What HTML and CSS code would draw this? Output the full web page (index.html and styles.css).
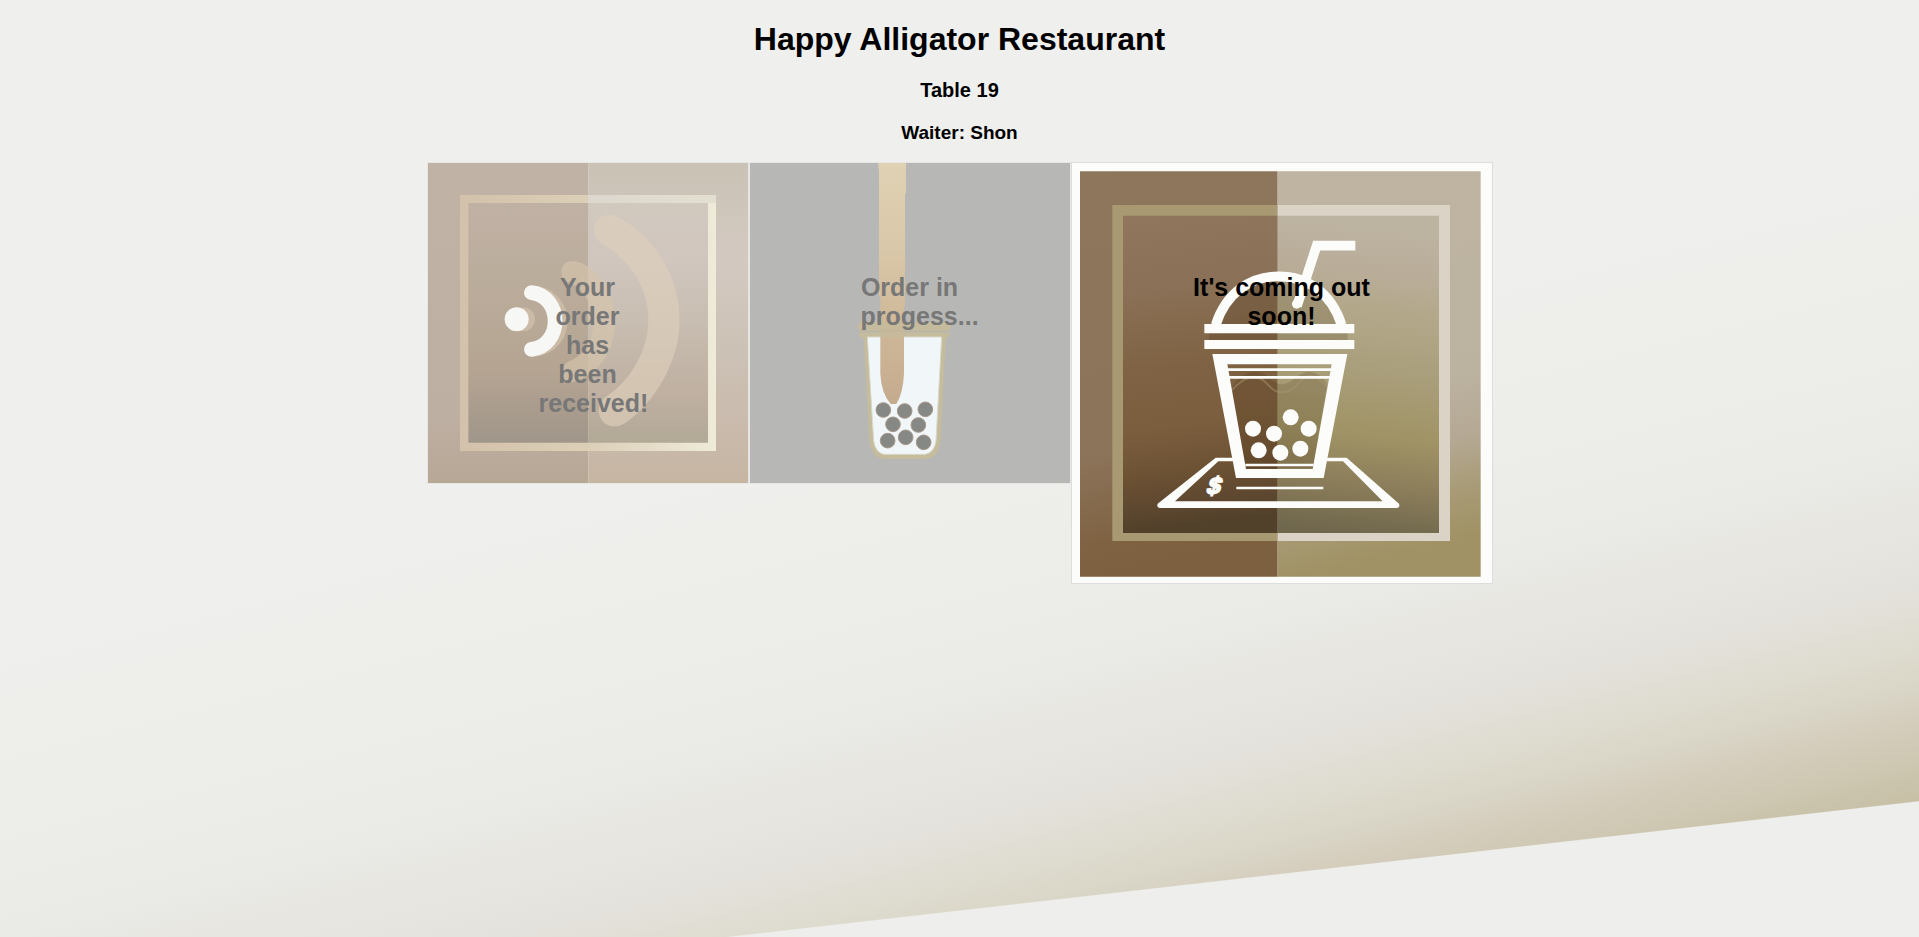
FILE: index.html
```html
<!DOCTYPE html>
<html lang="en">
<head>
<meta charset="utf-8">
<title>Happy Alligator Restaurant</title>
<link rel="stylesheet" href="styles.css">
</head>
<body>
<header class="header">
  <h1 class="title">Happy Alligator Restaurant</h1>
  <h2 class="table-number">Table 19</h2>
  <h3 class="waiter">Waiter: Shon</h3>
</header>
<main class="steps">
  <section class="step step-done">
    <svg class="art" viewBox="24 24 960 960" aria-hidden="true">
      <defs>
        <linearGradient id="a-left" x1="0" y1="0" x2="0" y2="1"><stop offset="0" stop-color="#c1b2a6"/><stop offset=".8" stop-color="#beafa3"/><stop offset="1" stop-color="#b7a795"/></linearGradient>
        <linearGradient id="a-right" x1="0" y1="0" x2="0" y2="1"><stop offset="0" stop-color="#cbc2b6"/><stop offset=".12" stop-color="#cec5ba"/><stop offset=".3" stop-color="#d3c9c1"/><stop offset=".6" stop-color="#cbc1b4"/><stop offset=".8" stop-color="#cabbae"/><stop offset="1" stop-color="#c6b5a1"/></linearGradient>
        <linearGradient id="a-in-left" x1="0" y1="0" x2="0" y2="1"><stop offset="0" stop-color="#c0b1a5"/><stop offset=".3" stop-color="#bbad9c"/><stop offset=".7" stop-color="#b5a492"/><stop offset="1" stop-color="#a0968a"/></linearGradient>
        <linearGradient id="a-in-right" x1="0" y1="0" x2="0" y2="1"><stop offset="0" stop-color="#d1c8be"/><stop offset=".25" stop-color="#d0c6be"/><stop offset=".5" stop-color="#c7bdb0"/><stop offset=".8" stop-color="#bfb0a1"/><stop offset="1" stop-color="#b2a997"/></linearGradient>
        <linearGradient id="a-frame" x1="0" y1="0" x2="1" y2="0"><stop offset="0" stop-color="#d3c1ab"/><stop offset=".5" stop-color="#dccfb8"/><stop offset="1" stop-color="#efebd9"/></linearGradient>
        <linearGradient id="a-top" x1="0" y1="0" x2="1" y2="0"><stop offset="0" stop-color="#dcd8ce"/><stop offset="1" stop-color="#e3dfd0"/></linearGradient>
      </defs>
      <path fill="url(#a-left)" d="M24 24h481v960H24z"/>
      <path fill="url(#a-right)" d="M505 24h479v960H505z"/>
      <path fill="url(#a-frame)" d="M120 120h768v768H120z"/>
      <path fill="url(#a-top)" d="M505 120h383v24H505z"/>
      <path fill="url(#a-in-left)" d="M145 144h360v719H145z"/>
      <path fill="url(#a-in-right)" d="M505 144h359v719H505z"/>
      <g fill="#dfd0bb" fill-opacity=".65">
        <path d="M588 184C704 243 779 365 779 495C779 616 706 741 617 803C591 821 558 817 543 791C529 767 538 739 560 724C633 675 685 586 685 492C685 400 631 315 548 268C524 254 515 226 526 204C537 181 566 174 588 184z"/>
      </g>
      <g fill="#d5c5ac" fill-opacity=".65">
        <path d="M466 319C539 336 585 418 585 505C585 590 530 665 460 681C440 685 425 670 425 652C425 636 435 624 451 617C493 599 519 555 519 507C519 453 491 398 447 382C427 375 421 357 425 341C429 325 447 315 466 319z"/>
      </g>
      <path d="M345 414C443 426 448 570 345 583" fill="none" stroke="#cbbba6" stroke-width="44" stroke-linecap="round"/>
      <circle cx="309" cy="493" r="36" fill="#cbbba6"/>
      <path d="M334 413C429 423 429 573 334 583" fill="none" stroke="#f7f7f5" stroke-width="44" stroke-linecap="round"/>
      <circle cx="290" cy="493" r="36" fill="#f7f7f5"/>
    </svg>
    <p class="caption">Your order has been received!</p>
  </section>
  <section class="step step-done">
    <svg class="art" viewBox="15 24 960 960" aria-hidden="true">
      <defs>
        <linearGradient id="b-tea" x1="0" y1="0" x2="0" y2="1"><stop offset="0" stop-color="#e1d1b4"/><stop offset=".35" stop-color="#d9c8a9"/><stop offset=".65" stop-color="#cfb999"/><stop offset="1" stop-color="#c5ab8e"/></linearGradient>
      </defs>
      <path fill="#b7b7b5" d="M15 24h960v960H15z"/>
      <path fill="#c5bb9d" d="M345 500h265l9 16-9 12H345l-9-12zM343 532h271v10l-12 11-15 300q-6 59-46 59H419q-40 0-46-59L356 553l-13-11z"/>
      <path fill="#f1f6f8" stroke="#d9d9ca" stroke-width="3" d="M367 546h223l-17 312q-5 35-32 40H416q-25-6-30-40z"/>
      <path fill="url(#b-tea)" d="M400 24h83v92h-3v340h-3v200q-3 60-23 91h-17q-28-31-31-91V425h-4V41h-2z"/>
      <path fill="#c5bb9d" fill-opacity=".7" d="M405 500h73v46h-73z"/>
      <path stroke="#b9b3a0" stroke-width="3" d="M345 528h266"/>
      <g fill="#868886" stroke="#a89788" stroke-width="3">
        <circle cx="415" cy="765" r="22"/><circle cx="479" cy="768" r="22"/><circle cx="541" cy="763" r="22"/>
        <circle cx="444" cy="808" r="22"/><circle cx="520" cy="810" r="22"/>
        <circle cx="428" cy="857" r="22"/><circle cx="482" cy="847" r="22"/><circle cx="536" cy="862" r="22"/>
      </g>
    </svg>
    <p class="caption">Order in progess...</p>
  </section>
  <section class="step step-current">
    <svg class="art" viewBox="21 24 1260 1260" aria-hidden="true">
      <defs>
        <linearGradient id="c-left" x1="0" y1="0" x2=".12" y2="1"><stop offset="0" stop-color="#8e765d"/><stop offset=".7" stop-color="#8c745a"/><stop offset=".92" stop-color="#7f6242"/><stop offset="1" stop-color="#7d6040"/></linearGradient>
        <linearGradient id="c-right" x1="0" y1="0" x2=".12" y2="1"><stop offset="0" stop-color="#beb4a1"/><stop offset=".6" stop-color="#bcb2a0"/><stop offset=".75" stop-color="#b5a995"/><stop offset=".88" stop-color="#a89b76"/><stop offset="1" stop-color="#a09264"/></linearGradient>
        <linearGradient id="c-in-left" x1="0" y1="0" x2=".06" y2="1"><stop offset="0" stop-color="#8f765d"/><stop offset=".25" stop-color="#8a7056"/><stop offset=".5" stop-color="#7f6243"/><stop offset=".68" stop-color="#7b5e3e"/><stop offset=".82" stop-color="#6d5234"/><stop offset=".92" stop-color="#5f4830"/><stop offset="1" stop-color="#51402a"/></linearGradient>
        <linearGradient id="c-in-right" x1=".06" y1="0" x2="0" y2="1"><stop offset="0" stop-color="#bdb3a1"/><stop offset=".15" stop-color="#b9ad99"/><stop offset=".26" stop-color="#b3a88a"/><stop offset=".45" stop-color="#aa9f7c"/><stop offset=".66" stop-color="#a09365"/><stop offset=".82" stop-color="#8b7d5a"/><stop offset=".93" stop-color="#766d50"/><stop offset="1" stop-color="#6d654d"/></linearGradient>
      </defs>
      <path fill="#fcfcfa" d="M21 24h1260v1260H21z"/>
      <path fill="url(#c-left)" d="M45 49h593v1216H45z"/>
      <path fill="url(#c-right)" d="M638 49h609v1216H638z"/>
      <path fill="#a89973" d="M142 150h496v1008H142z"/>
      <path fill="#dad3c6" d="M638 150h517v1008H638z"/>
      <path fill="url(#c-in-left)" d="M174 182h464v952H174z"/>
      <path fill="url(#c-in-right)" d="M638 182h484v952H638z"/>
      <path fill="#2f1c00" fill-opacity=".15" d="M467 507Q500 374 640 374Q775 374 812 507zM432 535h416v20H432zM497 706Q525 650 570 650C610 650 620 688 650 688S700 650 735 650Q770 655 786 690L744 940H543z"/>
      <path fill="none" stroke="#aa9a70" stroke-opacity=".45" stroke-width="6" d="M500 706C550 650 585 660 610 690S670 720 700 685S755 660 785 694"/>
      <g fill="none" stroke="#fcfcfa">
        <path stroke-width="29" d="M452 510C483 414 555 364 641 364S799 414 830 510"/>
        <path stroke-width="29" d="M696 453L755 272H871"/>
        <path stroke-width="8" d="M487 644H800M490 667H797M541 930H746M514 999H775"/>
      </g>
      <g fill="#fcfcfa">
        <circle cx="695" cy="447" r="14"/>
        <path d="M418 507h450v28H418zM418 555h450v27H418z"/>
        <path fill-rule="evenodd" d="M442 597H847L776 969H513zM487 628L543 942H743L800 628z"/>
        <path d="M505 908H452L278 1046Q273 1059 290 1059H990Q1007 1059 1002 1046L845 908H780V919H834L953 1039H330L460 919H507z"/>
        <circle cx="564" cy="821" r="24"/><circle cx="627" cy="836" r="24"/><circle cx="677" cy="787" r="24"/><circle cx="731" cy="821" r="24"/>
        <circle cx="581" cy="886" r="24"/><circle cx="646" cy="893" r="24"/><circle cx="706" cy="881" r="24"/>
        <text class="price" transform="translate(449 994) skewX(-18)" y="22">$</text>
      </g>
    </svg>
    <p class="caption">It's coming out soon!</p>
  </section>
</main>
</body>
</html>
```
FILE: styles.css
```css
* {
  box-sizing: border-box;
}

body {
  margin: 0;
  min-height: 100vh;
  font-family: "Liberation Sans", Arial, sans-serif;
  font-weight: bold;
  color: #000;
  background:
    linear-gradient(173.5deg, transparent 88.2%, #eeeeec 88.3%),
    linear-gradient(166deg, #efefee 0%, #efefed 45%, #eeeeeb 53%, #eaeae6 66%, #e4e2dc 75%, #dedccf 79.5%, #d9d5c6 82.5%, #d6cfbf 84%, #c7c0a6 90.4%);
}

.header {
  display: flex;
  flex-direction: column;
  align-items: center;
  padding: 20px 0 18px;
  gap: 21px;
  text-align: center;
}

.title,
.table-number,
.waiter {
  margin: 0;
}

.title {
  font-size: 32px;
  line-height: 38px;
}

.table-number {
  font-size: 20px;
  line-height: 22px;
}

.waiter {
  font-size: 19px;
  line-height: 22px;
}

.steps {
  display: flex;
  justify-content: center;
  align-items: flex-start;
}

.step {
  position: relative;
  flex: none;
  border: 1px solid #ddd;
}

.step-done {
  width: 322px;
  border-color: #e6e6e5;
  color: #777;
}

.step-current {
  width: 422px;
}

.art {
  display: block;
  width: 100%;
}

.caption {
  position: absolute;
  top: 110px;
  left: 50%;
  width: 98px;
  margin: 0 0 0 -49px;
  font-size: 25px;
  line-height: 29px;
  text-align: center;
}

.step-current .caption {
  width: 210px;
  margin-left: -105px;
}

.price {
  font-size: 72px;
  font-weight: bold;
  text-anchor: middle;
  stroke: #fcfcfa;
  stroke-width: 5px;
}
```
